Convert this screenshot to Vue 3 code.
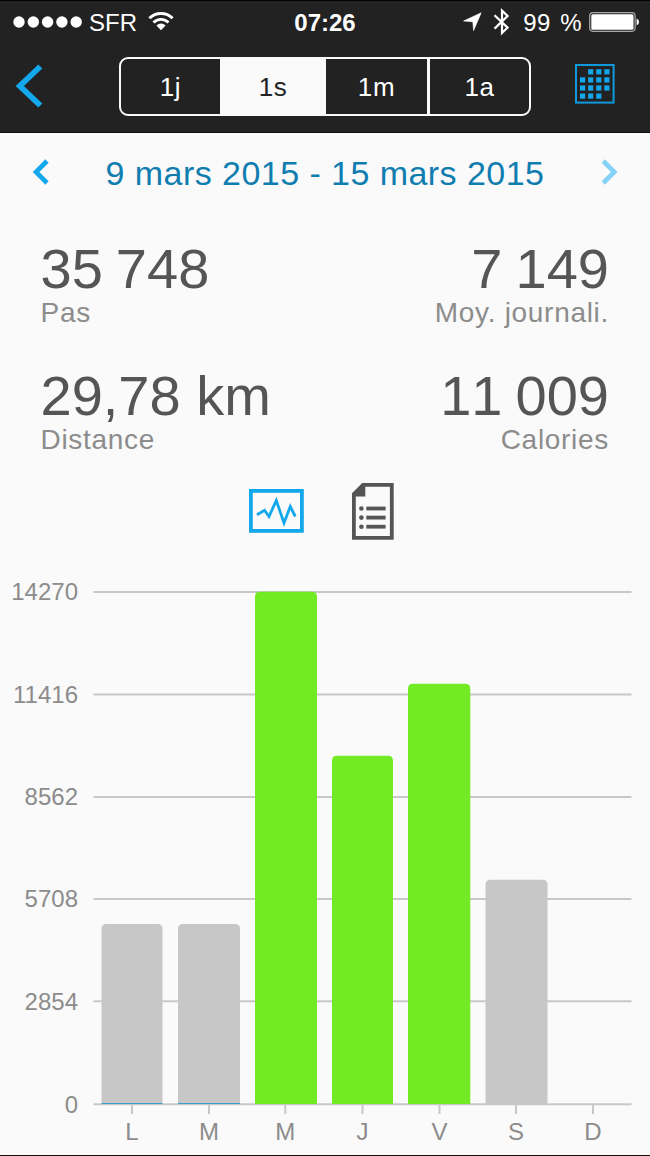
<script setup>
const ranges = [
  { label: '1j', active: false },
  { label: '1s', active: true },
  { label: '1m', active: false },
  { label: '1a', active: false }
]

const stats = [
  { value: '35 748', label: 'Pas' },
  { value: '7 149', label: 'Moy. journali.' },
  { value: '29,78 km', label: 'Distance', unit: true },
  { value: '11 009', label: 'Calories' }
]

const gridLines = [
  { value: 14270, y: 32 },
  { value: 11416, y: 134.5 },
  { value: 8562, y: 237 },
  { value: 5708, y: 339 },
  { value: 2854, y: 441.3 },
  { value: 0, y: 544.2 }
]

const days = [
  { name: 'L', x: 101.5, w: 61, top: 364, kind: 'low', tick: 132, base: true },
  { name: 'M', x: 178, w: 62, top: 364, kind: 'low', tick: 209, base: true },
  { name: 'M', x: 255, w: 62, top: 31.7, kind: 'goal', tick: 285.3 },
  { name: 'J', x: 332, w: 61, top: 195.7, kind: 'goal', tick: 362.5 },
  { name: 'V', x: 408, w: 62.3, top: 123.7, kind: 'goal', tick: 439.5 },
  { name: 'S', x: 485.5, w: 62, top: 319.7, kind: 'low', tick: 516 },
  { name: 'D', tick: 593 }
]

const bottom = 544
function barPath(d) {
  const r = 5
  const right = d.x + d.w
  return `M${d.x} ${bottom}V${d.top + r}Q${d.x} ${d.top} ${d.x + r} ${d.top}H${right - r}Q${right} ${d.top} ${right} ${d.top + r}V${bottom}Z`
}

const calendarCells = []
for (let row = 0; row < 4; row++) {
  for (let col = 0; col < 4; col++) {
    if ((row === 0 && col === 0) || (row === 3 && col === 3)) continue
    calendarCells.push({ x: 5 + col * 8.1, y: 5.2 + row * 8.1 })
  }
}
</script>

<template>
  <div class="screen">
    <header class="top">
      <div class="status">
        <div class="status-left">
          <svg class="dots" width="70" height="12" viewBox="0 0 70 12">
            <circle v-for="n in 5" :key="n" :cx="6 + (n - 1) * 14.3" cy="6" r="5.7" fill="#fff" />
          </svg>
          <span class="carrier">SFR</span>
          <svg class="wifi" width="26" height="20" viewBox="0 0 26 20">
            <g fill="none" stroke="#fff" stroke-width="2.9">
              <path d="M1.4 7.2A16.5 16.5 0 0 1 24.6 7.2" />
              <path d="M5.5 11.5A10.6 10.6 0 0 1 20.5 11.5" />
            </g>
            <path d="M8.4 14.4A6.5 6.5 0 0 1 17.6 14.4L13 19.2Z" fill="#fff" />
          </svg>
        </div>
        <div class="clock">07:26</div>
        <div class="status-right">
          <svg class="location" width="19" height="20" viewBox="0 0 19 20">
            <path d="M18.2 .8L10.6 18.6L9.8 9.8L.6 9Z" fill="#fff" stroke="#fff" stroke-width=".6" />
          </svg>
          <svg class="bluetooth" width="18" height="28" viewBox="0 0 18 28">
            <path d="M1.5 7.2L14.6 19.6L9 25V2.6L14.6 8L1.5 20.6" fill="none" stroke="#fff" stroke-width="2.2" />
          </svg>
          <span class="percent">99 %</span>
          <svg class="battery" width="51" height="20" viewBox="0 0 51 20">
            <rect x=".7" y=".7" width="45.4" height="18.6" rx="3.2" fill="none" stroke="#aaa" stroke-width="1.2" />
            <rect x="2.3" y="2.2" width="42.2" height="15.6" rx="1.6" fill="#fff" />
            <path d="M47.6 6.5Q50 7 50 10T47.6 13.5Z" fill="#fff" />
          </svg>
        </div>
      </div>
      <nav class="toolbar">
        <svg class="back" width="28" height="46" viewBox="0 0 28 46">
          <path d="M25.3 3.5L4.8 23L25.3 42.5" fill="none" stroke="#13a7ec" stroke-width="5.8" />
        </svg>
        <div class="segments">
          <div v-for="r in ranges" :key="r.label" class="segment" :class="{ active: r.active }">{{ r.label }}</div>
        </div>
        <svg class="calendar" width="40" height="40" viewBox="0 0 40 40">
          <rect x="1" y="1" width="37.6" height="37.6" fill="none" stroke="#0f9ade" stroke-width="2" />
          <rect v-for="(c, i) in calendarCells" :key="i" :x="c.x" :y="c.y" width="5.2" height="5.2" fill="#13a7ec" />
        </svg>
      </nav>
    </header>

    <div class="period">
      <svg width="18" height="28" viewBox="0 0 18 28">
        <path d="M16 3L5 14L16 25" fill="none" stroke="#13a7ec" stroke-width="4.6" />
      </svg>
      <span class="dates">9 mars 2015 - 15 mars 2015</span>
      <svg width="18" height="28" viewBox="0 0 18 28">
        <path d="M2.3 3L13.3 14L2.3 25" fill="none" stroke="#85d2f7" stroke-width="4.6" />
      </svg>
    </div>

    <section class="stats">
      <div v-for="s in stats" :key="s.label" class="stat">
        <div class="value" :class="{ unit: s.unit }">{{ s.value }}</div>
        <div class="label">{{ s.label }}</div>
      </div>
    </section>

    <div class="views">
      <svg class="graph" width="55" height="44" viewBox="0 0 55 44">
        <rect x="1.9" y="1.9" width="51" height="40" fill="none" stroke="#13a7ec" stroke-width="3.8" />
        <path d="M8 25.8L15.5 21.3L20 27.5L27.3 11.5L35 34L41.3 17.5L46.3 27.5" fill="none" stroke="#13a7ec" stroke-width="2.8" />
      </svg>
      <svg width="42" height="57" viewBox="0 0 42 57">
        <path d="M11 1.9H39.8V54.9H1.9V11Z" fill="none" stroke="#555" stroke-width="3.8" />
        <path d="M10 1H13.3V13.4H1V10Z" fill="#555" />
        <g fill="#555">
          <template v-for="n in 3" :key="n">
            <circle cx="9.4" :cy="16.4 + n * 9.1" r="2.3" />
            <rect x="14.3" :y="14.5 + n * 9.1" width="19.3" height="3.8" />
          </template>
        </g>
      </svg>
    </div>

    <svg class="chart" width="650" height="595" viewBox="0 0 650 595">
      <g v-for="g in gridLines" :key="g.value">
        <line x1="93.5" x2="631.5" :y1="g.y" :y2="g.y" class="grid" />
        <text x="78" :y="g.y + 8.3" text-anchor="end" class="axis">{{ g.value }}</text>
      </g>
      <g v-for="(d, i) in days" :key="i">
        <line :x1="d.tick" :x2="d.tick" y1="545" y2="554" class="tick" />
        <path v-if="d.kind" :d="barPath(d)" :class="d.kind" />
        <rect v-if="d.base" :x="d.x" y="543" :width="d.w" height="1" class="base" />
        <text :x="d.tick" y="580.3" text-anchor="middle" class="axis">{{ d.name }}</text>
      </g>
    </svg>
  </div>
</template>

<style>
body {
  margin: 0;
  background: #fafafa;
}
</style>

<style scoped>
.screen {
  box-sizing: border-box;
  width: 650px;
  height: 1156px;
  overflow: hidden;
  display: flex;
  flex-direction: column;
  background: #fafafa;
  border-bottom: 1px solid #111;
  font-family: "Liberation Sans", Arial, sans-serif;
}
svg {
  display: block;
  flex: none;
}
.top {
  box-sizing: border-box;
  height: 133px;
  flex: none;
  background: #222;
  border-top: 1px solid #000;
  border-bottom: 1px solid #0c0c0c;
  color: #fff;
}
.status {
  height: 43px;
  display: grid;
  grid-template-columns: 1fr auto 1fr;
  align-items: center;
  font-size: 24px;
  line-height: 28px;
}
.status-left,
.status-right {
  display: flex;
  align-items: center;
}
.status-left {
  padding-left: 12.5px;
}
.dots {
  margin-top: -1px;
}
.carrier {
  margin-left: 6.5px;
}
.wifi {
  margin-left: 11px;
  margin-top: -3px;
}
.clock {
  font-weight: 700;
}
.status-right {
  justify-content: flex-end;
  padding-right: 10px;
}
.location,
.bluetooth,
.battery {
  margin-top: -1px;
}
.bluetooth {
  margin-left: 11px;
}
.percent {
  margin: 0 7px 0 12px;
  letter-spacing: 0.4px;
  word-spacing: 2.4px;
}
.toolbar {
  height: 88px;
  display: flex;
  align-items: center;
  padding: 0 35px 0 15px;
}
.back {
  margin-top: -4px;
}
.segments {
  box-sizing: border-box;
  width: 412px;
  height: 59px;
  margin: -3px 0 0 76px;
  display: grid;
  grid-template-columns: 99px 106px 101px 1fr;
  border: 2px solid #fafafa;
  border-radius: 9px;
  overflow: hidden;
}
.segment {
  box-sizing: border-box;
  display: flex;
  align-items: center;
  justify-content: center;
  padding-top: 1px;
  font-size: 26px;
  line-height: 30px;
  letter-spacing: 0.6px;
}
.segment.active {
  background: #fafafa;
  color: #222;
}
.segment:last-child {
  border-left: 3px solid #fafafa;
}
.calendar {
  margin-top: -8px;
  margin-left: auto;
}
.period {
  height: 78px;
  flex: none;
  display: flex;
  align-items: center;
  justify-content: space-between;
  padding: 0 31px;
  color: #107db0;
}
.dates {
  font-size: 34px;
  line-height: 40px;
  letter-spacing: 0.45px;
  margin-top: 1px;
  white-space: nowrap;
}
.stats {
  height: 254px;
  flex: none;
  display: grid;
  grid-template-columns: 1fr 1fr;
  grid-template-rows: 127px 127px;
  padding: 30px 41px 0 40.5px;
  box-sizing: border-box;
}
.stat:nth-child(even) {
  text-align: right;
}
.value {
  font-size: 56px;
  line-height: 56px;
  color: #555;
  white-space: nowrap;
  font-kerning: none;
  word-spacing: -2.5px;
}
.value.unit {
  word-spacing: 0;
}
.label {
  font-size: 28px;
  line-height: 30px;
  margin-top: 1px;
  letter-spacing: 0.7px;
  color: #8c8c8c;
}
.views {
  height: 95px;
  flex: none;
  box-sizing: border-box;
  display: flex;
  align-items: center;
  justify-content: center;
  gap: 48.5px;
  padding: 0 7px 2px 0;
}
.graph {
  margin-top: -2px;
}
.chart {
  font-size: 24px;
}
.axis {
  fill: #8c8c8c;
}
.grid,
.tick {
  stroke: #c8c8c8;
  stroke-width: 2;
}
.low {
  fill: #c7c7c7;
}
.goal {
  fill: #72eb24;
}
.base {
  fill: #3c9fd0;
}
</style>
